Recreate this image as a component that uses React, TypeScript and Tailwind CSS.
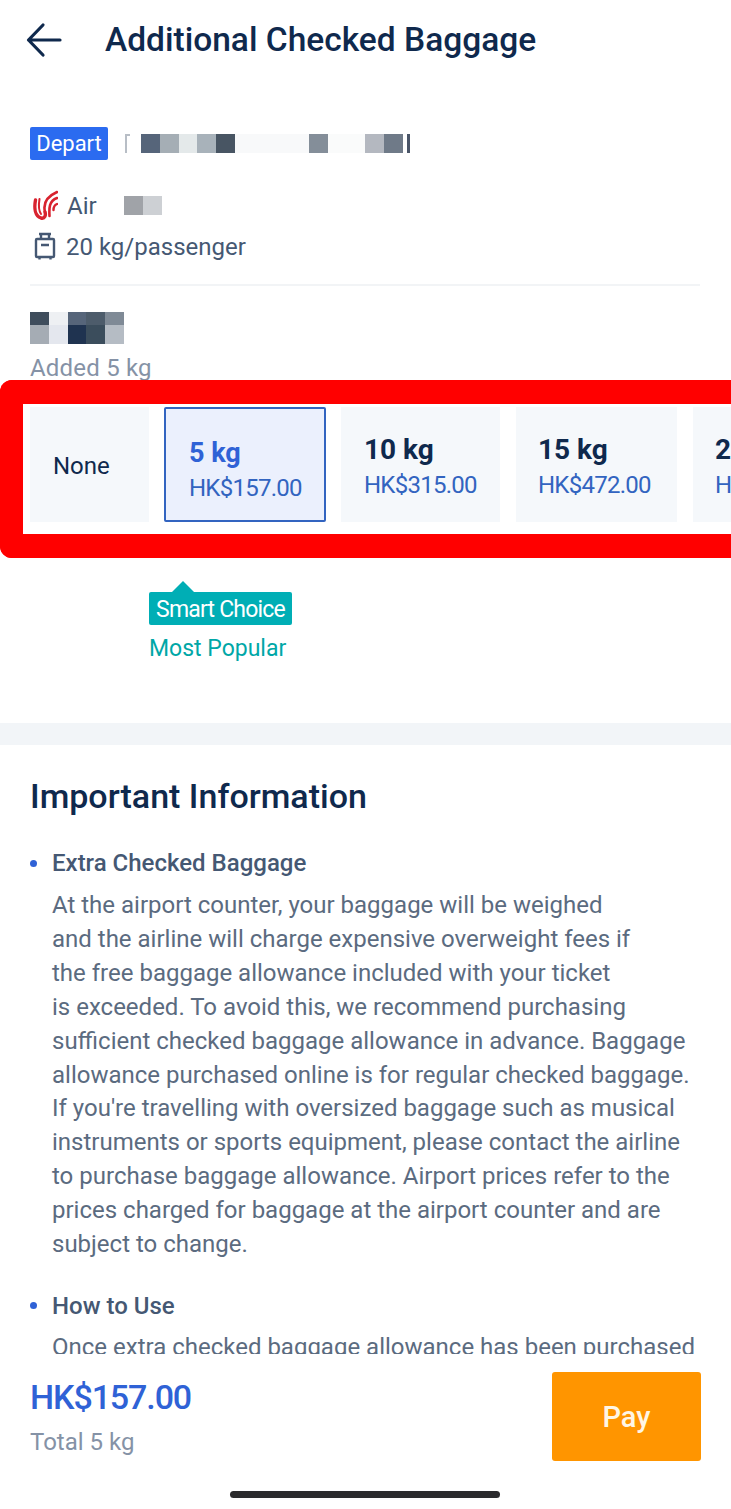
export default function App() {
  const lines = [
    "At the airport counter, your baggage will be weighed",
    "and the airline will charge expensive overweight fees if",
    "the free baggage allowance included with your ticket",
    "is exceeded. To avoid this, we recommend purchasing",
    "sufficient checked baggage allowance in advance. Baggage",
    "allowance purchased online is for regular checked baggage.",
    "If you're travelling with oversized baggage such as musical",
    "instruments or sports equipment, please contact the airline",
    "to purchase baggage allowance. Airport prices refer to the",
    "prices charged for baggage at the airport counter and are",
    "subject to change.",
  ];
  return (
    <div className="relative w-[731px] h-[1509px] overflow-hidden bg-white flex flex-col font-['Roboto',sans-serif] text-[#0f294d]">
      <div className="h-[1354px] shrink-0 overflow-hidden">
        <header className="h-[80px] flex items-center pl-[26px]">
          <svg width="36" height="36" viewBox="0 0 36 36" fill="none" stroke="#0f294d" strokeWidth="3.2" strokeLinecap="round" strokeLinejoin="round">
            <path d="M34 18H2.500M17 3 2.500 18 17 33" />
          </svg>
          <h1 className="ml-[43px] text-[33.5px] leading-[40px] font-medium">Additional Checked Baggage</h1>
        </header>

        <section className="px-[30px] pt-[47px]">
          <div className="flex items-center h-[33px]">
            <span className="w-[78px] h-[33px] bg-[#2b6bf0] rounded-[2px] text-white text-[22px] leading-[33px] text-center">Depart</span>
            <div className="ml-[17px] flex items-center h-[19px]">
              <div className="w-[5px] h-[19px] border-l-2 border-t-2 border-[#b8bec6] mr-[11px]" />
              <div className="w-[19px] h-[19px] bg-[#56657a]" />
              <div className="w-[19px] h-[19px] bg-[#a5aeb5]" />
              <div className="w-[18px] h-[19px] bg-[#e4e9ea]" />
              <div className="w-[19px] h-[19px] bg-[#a8b2ba]" />
              <div className="w-[19px] h-[19px] bg-[#485563]" />
              <div className="w-[74px] h-[19px] bg-[#f8f9fa]" />
              <div className="w-[19px] h-[19px] bg-[#848e99]" />
              <div className="w-[37px] h-[19px] bg-[#fafbfb]" />
              <div className="w-[19px] h-[19px] bg-[#b4b8c0]" />
              <div className="w-[19px] h-[19px] bg-[#6f7a88]" />
              <div className="w-[3px] h-[19px] bg-[#4a5568] ml-[4px]" />
            </div>
          </div>

          <div className="mt-[28px] flex items-center h-[34px]">
            <svg width="26" height="30" viewBox="0 0 26 30" fill="none" stroke="#d8232f" strokeLinecap="round" className="ml-[2px]">
              <path d="M3.500 10C2 18 3 26 9 28c4 1 5-3 4-6" strokeWidth="3.400" />
              <path d="M13 22C11 14 14 7 25 2" strokeWidth="2.600" />
              <path d="M7.500 9C6.500 15 7 21 9 24" strokeWidth="2" />
              <path d="M17.500 26C17 18 17 11 25 8" strokeWidth="2.600" />
              <path d="M21.500 20C21.500 17 22.500 15 25 14" strokeWidth="2.400" />
            </svg>
            <span className="ml-[9px] pt-[2px] text-[24px] leading-[34px] text-[#455873]">Air</span>
            <div className="ml-[27px] w-[19px] h-[19px] bg-[#a0a3a8]" />
            <div className="w-[19px] h-[19px] bg-[#cdd0d4]" />
          </div>

          <div className="mt-[7px] flex items-center h-[34px]">
            <svg width="24" height="30" viewBox="0 0 24 30" fill="none" stroke="#455873" strokeWidth="2.400" className="ml-[3px]">
              <rect x="3" y="8" width="18" height="18" rx="1" />
              <path d="M8 8V3h8v5M6 3h12M8 14h8M6.500 26v2.500M17.500 26v2.500" />
            </svg>
            <span className="ml-[9px] pt-[2px] text-[24px] leading-[34px] text-[#455873]">20 kg/passenger</span>
          </div>

          <div className="mt-[21px] h-[2px] w-[670px] bg-[#f2f4f6]" />

          <div className="mt-[26px] w-[94px] grid grid-cols-5">
            <div className="h-[13px] bg-[#3f4d5c]" />
            <div className="h-[13px] bg-[#eef0f3]" />
            <div className="h-[13px] bg-[#56657a]" />
            <div className="h-[13px] bg-[#4d5c6b]" />
            <div className="h-[13px] bg-[#7f8a96]" />
            <div className="h-[19px] bg-[#a5acb4]" />
            <div className="h-[19px] bg-[#e4e7ee]" />
            <div className="h-[19px] bg-[#1f3350]" />
            <div className="h-[19px] bg-[#3b4d5c]" />
            <div className="h-[19px] bg-[#b5bcc4]" />
          </div>

          <p className="mt-[8px] text-[24px] leading-[32px] text-[#8592a6] tracking-[0.2px]">Added 5 kg</p>
        </section>

        <div className="mt-[23px] ml-[30px] flex gap-[16px] h-[115px] whitespace-nowrap">
          <div className="w-[119px] shrink-0 bg-[#f5f8fb] flex items-center pl-[23px] pt-[2px] text-[24px] text-[#0f294d]">None</div>
          <div className="w-[162px] shrink-0 -ml-px bg-[#ebf0fd] border-2 border-[#3264c0] rounded-[2px] pl-[23px] pt-[26px]">
            <div className="text-[27px] leading-[36px] font-bold text-[#2f62d6]">5 kg</div>
            <div className="text-[24px] leading-[34px] text-[#3264c0] tracking-[-0.75px]">HK$157.00</div>
          </div>
          <div className="w-[159px] shrink-0 -ml-px bg-[#f5f8fb] pl-[23px] pt-[25px]">
            <div className="text-[28px] leading-[36px] font-bold">10 kg</div>
            <div className="text-[24px] leading-[34px] text-[#3264c0] tracking-[-0.75px]">HK$315.00</div>
          </div>
          <div className="w-[161px] shrink-0 bg-[#f5f8fb] pl-[22px] pt-[25px]">
            <div className="text-[28px] leading-[36px] font-bold">15 kg</div>
            <div className="text-[24px] leading-[34px] text-[#3264c0] tracking-[-0.75px]">HK$472.00</div>
          </div>
          <div className="w-[39px] shrink-0 overflow-hidden bg-[#f5f8fb] pl-[22px] pt-[25px]">
            <div className="text-[28px] leading-[36px] font-bold">2</div>
            <div className="text-[24px] leading-[34px] text-[#3264c0]">H</div>
          </div>
        </div>

        <div className="ml-[149px] mt-[70px] relative w-[143px]">
          <svg width="24" height="12" viewBox="0 0 24 12" className="absolute left-[22px] -top-[11px]">
            <path d="M12 0 24 12H0Z" fill="#00aeb5" />
          </svg>
          <div className="h-[33px] pt-[1px] rounded-[2px] bg-[#00aeb5] text-white text-[23px] leading-[33px] text-center whitespace-nowrap tracking-[-0.8px]">Smart Choice</div>
          <div className="mt-[8px] text-[23px] leading-[32px] text-[#00a7a7] whitespace-nowrap">Most Popular</div>
        </div>

        <div className="mt-[58px] h-[22px] bg-[#f2f5f8]" />

        <section className="px-[30px] pt-[29px]">
          <h2 className="text-[34px] leading-[44px] font-medium">Important Information</h2>
          <div className="mt-[28px] flex items-center h-[34px]">
            <span className="w-[7px] h-[7px] rounded-full bg-[#2f62d6]" />
            <span className="ml-[15px] text-[24px] leading-[34px] font-medium text-[#455873]">Extra Checked Baggage</span>
          </div>
          <div className="mt-[9px] ml-[22px] text-[24px] leading-[33.9px] text-[#5b6b80] whitespace-nowrap">
            {lines.map((l) => (
              <div key={l}>{l}</div>
            ))}
          </div>
          <div className="mt-[27px] flex items-center h-[34px]">
            <span className="w-[7px] h-[7px] rounded-full bg-[#2f62d6]" />
            <span className="ml-[15px] text-[24px] leading-[34px] font-medium text-[#455873]">How to Use</span>
          </div>
          <div className="mt-[7px] ml-[22px] text-[24px] leading-[34px] text-[#5b6b80] whitespace-nowrap">
            Once extra checked baggage allowance has been purchased
          </div>
        </section>
      </div>

      <footer className="flex-1 bg-white px-[30px] pt-[18px] flex justify-between">
        <div>
          <div className="mt-[2px] text-[34px] leading-[46px] font-medium text-[#2f62d6] tracking-[-1.1px]">HK$157.00</div>
          <div className="mt-[6px] text-[24px] leading-[32px] text-[#8592a6]">Total 5 kg</div>
        </div>
        <button className="w-[149px] h-[89px] pt-[3px] bg-[#ff9500] rounded-[3px] text-[#fff6e5] text-[29px] font-medium">Pay</button>
      </footer>

      <div className="absolute left-[230px] top-[1491px] w-[270px] h-[7px] rounded-full bg-[#2b2b2d]" />
      <div className="absolute left-0 top-[380px] w-[800px] h-[178px] border-solid border-y-[24px] border-l-[23px] border-r-0 border-[#ff0000] rounded-l-[12px] pointer-events-none" />
    </div>
  );
}
